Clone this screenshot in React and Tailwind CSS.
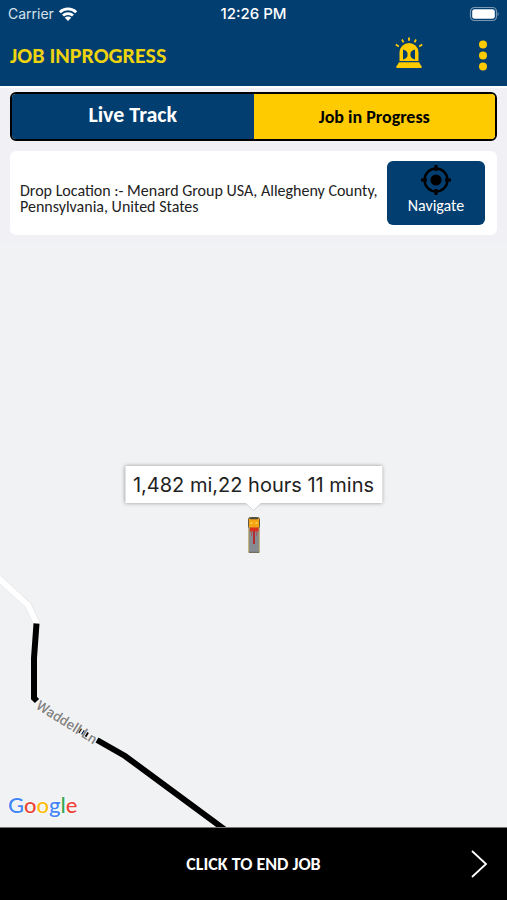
import { useState } from 'react';

const DESTINATION = 'Menard Group USA, Allegheny County, Pennsylvania, United States';

function StatusBar() {
  return (
    <div className="grid grid-cols-3 items-center h-7 pl-2 pr-2 font-['Inter',sans-serif] text-[15px] text-white">
      <div className="flex items-center gap-1 text-[#d5e2ec]">
        <span className="text-sm">Carrier</span>
        <svg className="w-5 h-4" viewBox="0 0 20 16" fill="none" stroke="#fff" strokeWidth="2.8" aria-hidden="true">
          <path d="M1.8 6.2a11.8 11.8 0 0 1 16.4 0" />
          <path d="M5 9.6a7.2 7.2 0 0 1 10 0" />
          <path d="M10 15l-3.2-3.3a4.6 4.6 0 0 1 6.4 0z" fill="#fff" stroke="none" />
        </svg>
      </div>
      <span className="text-center font-medium whitespace-nowrap">12:26 PM</span>
      <svg className="w-8 h-4 justify-self-end" viewBox="0 0 32 16" aria-hidden="true">
        <rect x="3.5" y="1.5" width="26" height="13" rx="4" fill="none" stroke="#7898b4" strokeWidth="1.2" />
        <rect x="5.2" y="3.2" width="22.6" height="9.6" rx="2.4" fill="#fff" />
        <path d="M30.6 6v4c1.4-.4 1.4-3.6 0-4z" fill="#7898b4" />
      </svg>
    </div>
  );
}

function SirenIcon() {
  return (
    <svg className="w-7 h-8" viewBox="0 0 28 32" fill="#fecb00" aria-hidden="true">
      <g stroke="#fecb00" strokeWidth="1.8">
        <path d="M14 0.5v3.300M7 2.500l1.500 2.800M21 2.500l-1.500 2.800M0.800 7.500l3 1.900M27.200 7.500l-3 1.900" />
      </g>
      <path d="M4.500 24V15.500a9.500 9.500 0 0 1 19 0V24z" />
      <path d="M8 12.500c3 .6 4.600 2.200 4.600 5s-1.600 4.400-4.600 5z" fill="#023e6f" />
      <path d="M20 12.500c-3 .6-4.600 2.200-4.600 5s1.600 4.400 4.600 5z" fill="#023e6f" />
      <path d="M4 25.200h20l2.800 4.500q0 1.300-1 1.300H2.200q-1 0-1-1.300z" />
    </svg>
  );
}

function Header() {
  return (
    <header className="bg-[#023e6f]">
      <StatusBar />
      <div className="flex items-center justify-between h-[58px] pl-[10px] pr-3 pb-1">
        <h1 className="font-bold text-[22px] text-[#eed30f]">JOB INPROGRESS</h1>
        <div className="flex items-center gap-12">
          <button type="button" aria-label="Emergency" className="pb-1">
            <SirenIcon />
          </button>
          <button type="button" aria-label="More options" className="flex justify-center w-6">
            <svg className="w-2 h-8" viewBox="0 0 8 32" fill="#fecb00" aria-hidden="true">
              <circle cx="4" cy="5.5" r="4" />
              <circle cx="4" cy="16.5" r="4" />
              <circle cx="4" cy="27.500" r="4" />
            </svg>
          </button>
        </div>
      </div>
    </header>
  );
}

function Tabs({ active, onChange }) {
  return (
    <div className="flex h-[49px] border-2 border-black rounded-md overflow-hidden">
      <button
        type="button"
        aria-pressed={active === 'track'}
        onClick={() => onChange('track')}
        className="flex-1 bg-[#023e6f] text-white text-[22px] font-bold leading-6 pb-1"
      >
        Live Track
      </button>
      <button
        type="button"
        aria-pressed={active === 'job'}
        onClick={() => onChange('job')}
        className="flex-1 bg-[#fecb00] text-black text-lg font-bold leading-6"
      >
        Job in Progress
      </button>
    </div>
  );
}

function DropCard() {
  return (
    <div className="flex items-center justify-between gap-2 bg-white rounded-md py-[10px] pl-[10px] pr-3">
      <p className="flex-1 text-base leading-4 text-[#222] pt-3">{`Drop Location :- ${DESTINATION}`}</p>
      <button
        type="button"
        className="flex flex-col items-center w-[98px] h-16 pt-[3px] rounded-md bg-[#023e6f] text-white text-base leading-5"
      >
        <svg className="w-8 h-8" viewBox="0 0 32 32" fill="none" stroke="#000" aria-hidden="true">
          <circle cx="16" cy="16" r="11.5" strokeWidth="2.400" />
          <circle cx="16" cy="16" r="5.600" fill="#000" stroke="none" />
          <path d="M16 1v6M16 25v6M1 16h6M25 16h6" strokeWidth="3" />
        </svg>
        Navigate
      </button>
    </div>
  );
}

function Truck() {
  return (
    <svg className="w-3 h-9" viewBox="0 0 12 36" aria-hidden="true">
      <rect x="0.5" y="0.5" width="11" height="11" rx="1.8" fill="#f5a313" stroke="#5f5a45" />
      <path d="M2 1.5h8" stroke="#4b4b42" strokeWidth="1.5" />
      <path d="M2.5 6h2M7.5 6h2" stroke="#ffdb55" strokeWidth="1.5" />
      <rect x="0.8" y="11" width="10.4" height="24.5" fill="#858b91" stroke="#b59a4a" strokeWidth="0.8" />
      <rect x="2" y="10.5" width="8.5" height="4" fill="#d9311e" />
      <path d="M6 14v13" stroke="#b32b35" strokeWidth="2" />
      <path d="M3.5 15v4M8.5 15v4" stroke="#ad545a" strokeWidth="1" />
      <path d="M1 35.3h10" stroke="#626262" />
    </svg>
  );
}

function LiveMap() {
  return (
    <main className="relative flex flex-1 items-center justify-center min-h-80 bg-[#f0f2f4] overflow-hidden">
      <svg className="absolute left-0 bottom-0 w-60 h-[267px]" viewBox="0 0 240 267" fill="none" aria-label="Waddell Ln">
        <path d="M-4 16L28 45L37 64" stroke="#dfe2e4" strokeWidth="7" />
        <path d="M-4 16L28 45L37 64" stroke="#fff" strokeWidth="6" />
        <path d="M36.500 63.500L34 98V138L37 141" stroke="#000" strokeWidth="6" />
        <path d="M79 170l10 6" stroke="#000" strokeWidth="5" strokeDasharray="2 2" />
        <path d="M97 180L125 196L228 272" stroke="#000" strokeWidth="6" />
        <text
          transform="translate(35 148) rotate(32)"
          className="font-['Roboto',sans-serif] text-sm font-medium"
          fill="#858585"
          stroke="#fff"
          strokeWidth="1"
          paintOrder="stroke"
        >
          Waddell Ln
        </text>
      </svg>

      <div className="relative">
        <Truck />
        <div className="absolute bottom-full left-1/2 -translate-x-1/2 mb-[14px] h-[37px] px-2 flex items-center bg-white shadow-[0_0_4px_rgba(0,0,0,0.4)] font-['Inter',sans-serif] text-xl text-[#222] whitespace-nowrap">
          1,482 mi,22 hours 11 mins
          <svg className="absolute top-full left-1/2 -translate-x-1/2 w-4 h-2" viewBox="0 0 16 8" aria-hidden="true">
            <path d="M0 0h16L8 7.5z" fill="#fff" />
            <path d="M0 0l8 7.5L16 0" fill="none" stroke="#c9cbcd" strokeWidth="0.8" />
          </svg>
        </div>
      </div>

      <a
        href="#google"
        className="absolute left-2 bottom-[10px] font-['Lato',sans-serif] text-[22px] leading-6 font-medium [text-shadow:0_0_2px_#fff,0_0_2px_#fff]"
      >
        <span className="text-[#4285f4]">G</span>
        <span className="text-[#ea4335]">o</span>
        <span className="text-[#fbbc05]">o</span>
        <span className="text-[#4285f4]">g</span>
        <span className="text-[#34a853]">l</span>
        <span className="text-[#ea4335]">e</span>
      </a>
    </main>
  );
}

export default function App() {
  const [tab, setTab] = useState('job');

  return (
    <div className="flex flex-col min-h-screen bg-[#f0f0f5] font-['Carlito','Lato',sans-serif]">
      <Header />
      <div className="flex flex-col gap-[10px] border-t-2 border-white px-[10px] pt-1 pb-2">
        <Tabs active={tab} onChange={setTab} />
        <DropCard />
      </div>
      <LiveMap />
      <button
        type="button"
        className="grid grid-cols-[1fr_auto_1fr] items-center h-[73px] px-[18px] border-t border-[#777] bg-black text-white text-lg font-bold"
      >
        <span className="col-start-2">CLICK TO END JOB</span>
        <svg className="w-5 h-8 justify-self-end" viewBox="0 0 20 32" fill="none" stroke="#fff" strokeWidth="1.8" aria-hidden="true">
          <path d="M3 3l14 13L3 29" />
        </svg>
      </button>
    </div>
  );
}
